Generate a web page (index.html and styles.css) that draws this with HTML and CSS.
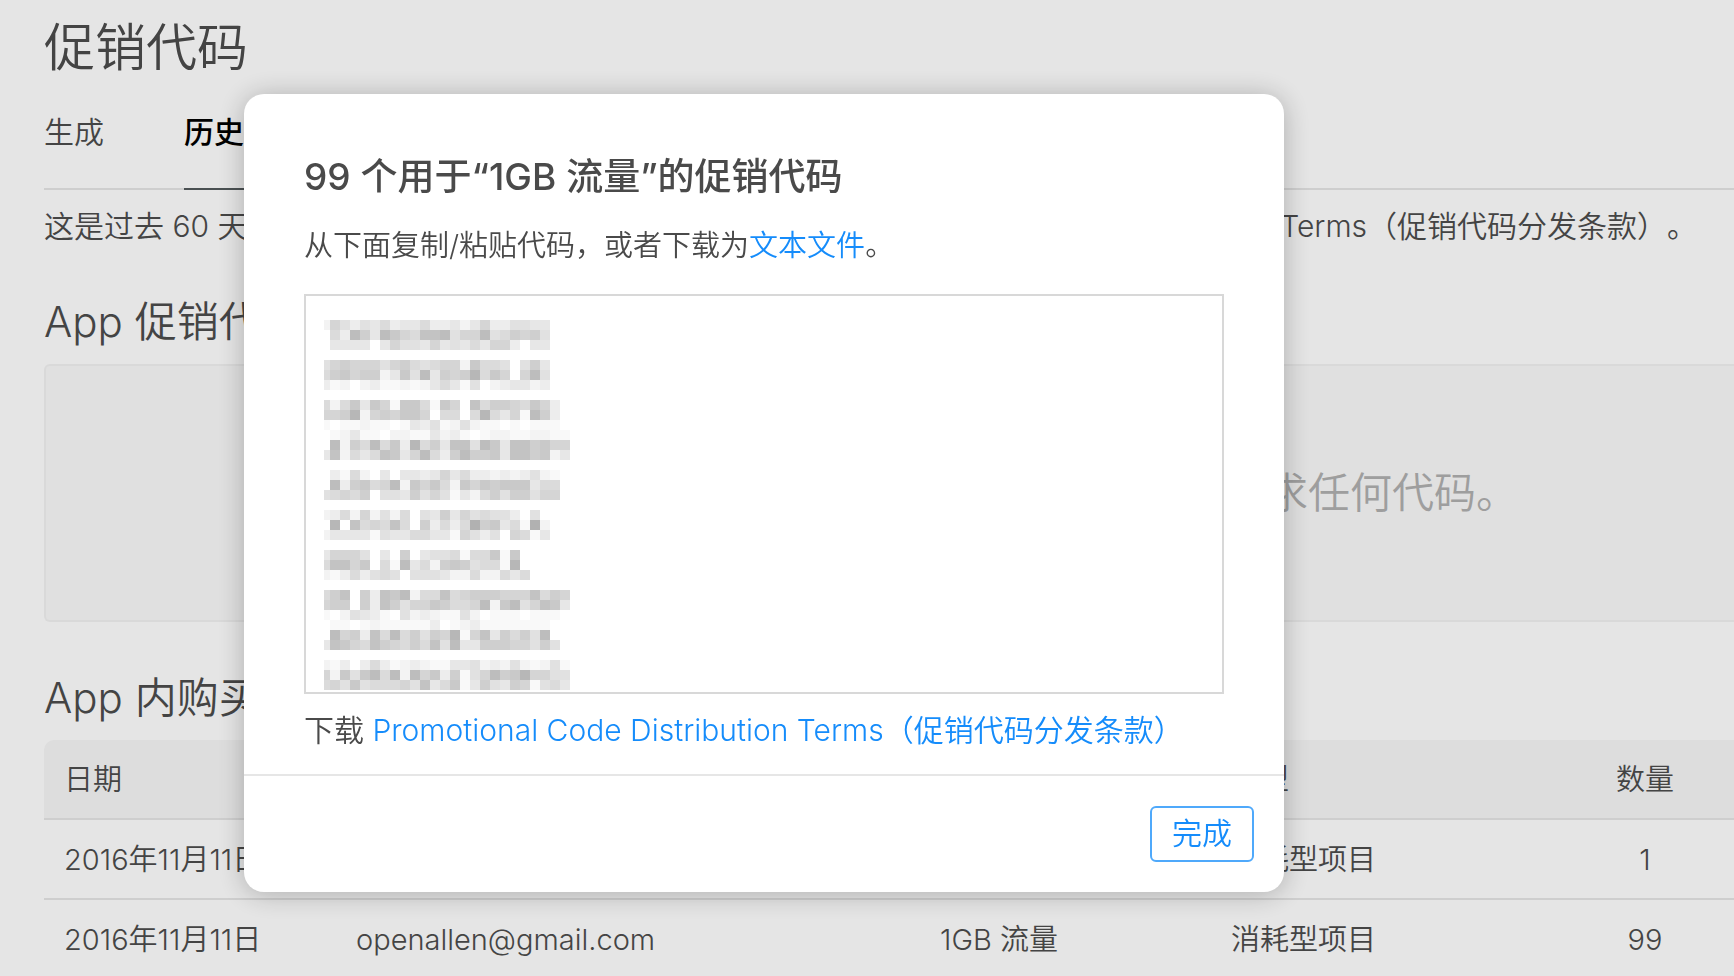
FILE: index.html
```html
<!DOCTYPE html>
<html lang="zh-CN">

<head>
    <meta charset="UTF-8" />
    <meta name="viewport" content="width=device-width, initial-scale=1.0" />
    <link rel="stylesheet" href="styles.css">
    <title>促销代码</title>
</head>

<body>
    <main class="page">
        <h1 class="page-title">促销代码</h1>
        <nav class="tabs">
            <a class="tab" href="#generate">生成</a>
            <a class="tab active" href="#history">历史</a>
        </nav>
        <p class="intro">这是过去 60 天内请求的所有促销代码。使用代码时必须遵守 Promotional Code Distribution Terms（促销代码分发条款）。</p>

        <h2 class="section-title">App 促销代码</h2>
        <div class="empty-box">您在过去 60 天内未请求任何代码。</div>

        <h2 class="section-title">App 内购买</h2>
        <table class="history">
            <thead>
                <tr>
                    <th class="col-date">日期</th>
                    <th class="col-user">用户</th>
                    <th class="col-name">名称</th>
                    <th class="col-type">类型</th>
                    <th class="col-count">数量</th>
                </tr>
            </thead>
            <tbody>
                <tr>
                    <td>2016年11月11日</td>
                    <td>openallen@gmail.com</td>
                    <td>1GB 流量</td>
                    <td>消耗型项目</td>
                    <td class="col-count">1</td>
                </tr>
                <tr>
                    <td>2016年11月11日</td>
                    <td>openallen@gmail.com</td>
                    <td>1GB 流量</td>
                    <td>消耗型项目</td>
                    <td class="col-count">99</td>
                </tr>
            </tbody>
        </table>
    </main>

    <div class="overlay">
        <section class="modal" role="dialog" aria-labelledby="modal-title">
            <div class="modal-body">
                <h2 class="modal-title" id="modal-title">99 个用于“1GB 流量”的促销代码</h2>
                <p class="modal-text">从下面复制/粘贴代码，或者下载为<a href="#file">文本文件</a>。</p>
                <div class="codes">
                    <svg id="mosaic" width="246" height="370" viewBox="4 0 246 370" shape-rendering="crispEdges"></svg>
                </div>
                <p class="modal-terms">下载 <a href="#terms">Promotional Code Distribution Terms（促销代码分发条款）</a></p>
            </div>
            <div class="modal-footer">
                <button type="button" class="btn">完成</button>
            </div>
        </section>
    </div>
    <script src="script.js"></script>
</body>

</html>
```
FILE: styles.css
```css
* {
    margin: 0;
    padding: 0;
    box-sizing: border-box;
}

body {
    background-color: #fff;
    color: #4c4c4c;
    font-family: Inter, "Noto Sans CJK SC", sans-serif;
    font-size: 30px;
    font-weight: 350;
    line-height: 40px;
    text-spacing-trim: space-all;
    overflow: hidden;
}

a {
    color: #158cfb;
    text-decoration: none;
}

.page {
    padding: 12px 0 0 44px;
}

.page-title {
    font-size: 51px;
    font-weight: 350;
    line-height: 72px;
}

.tabs {
    display: flex;
    gap: 80px;
    height: 86px;
    margin-top: 20px;
    border-bottom: 2px solid #e6e6e6;
}

.tab {
    height: 86px;
    padding-top: 8px;
    color: #4c4c4c;
}

.tab.active {
    color: #000;
    font-weight: 500;
    border-bottom: 2px solid #535a5c;
}

.intro {
    padding: 16px 0 32px;
    white-space: nowrap;
}

.section-title {
    font-size: 42px;
    font-weight: 350;
    line-height: 60px;
    padding-top: 14px;
    margin-bottom: 12px;
}

.empty-box {
    height: 258px;
    margin-bottom: 32px;
    padding-right: 216px;
    border: 2px solid #f2f2f2;
    border-right: 0;
    border-radius: 6px 0 0 6px;
    background-color: #fafafa;
    color: #b0b0b0;
    font-size: 42px;
    line-height: 254px;
    text-align: right;
}

.history {
    width: 100%;
    table-layout: fixed;
    border-collapse: separate;
    border-spacing: 0;
    font-size: 29px;
}

.history th,
.history td {
    height: 80px;
    padding: 2px 0 0 20px;
    border-bottom: 2px solid #e6e6e6;
    font-weight: 350;
    text-align: left;
    white-space: nowrap;
}

.history th {
    background-color: #f7f7f7;
}

.history th:first-child {
    border-radius: 10px 0 0 0;
}

.history .col-date {
    width: 292px;
}

.history .col-user {
    width: 584px;
}

.history .col-name {
    width: 291px;
}

.history .col-count {
    width: 178px;
    padding-left: 0;
    text-align: center;
}

.overlay {
    position: fixed;
    inset: 0;
    padding: 94px 0 0 244px;
    background-color: rgba(0, 0, 0, 0.1);
}

.modal {
    width: 1040px;
    max-width: 100%;
    border-radius: 20px;
    background-color: #fff;
    box-shadow: 0 2px 28px rgba(0, 0, 0, 0.25);
    color: #4a4a4a;
}

.modal-body {
    padding: 56px 60px 24px;
}

.modal-title {
    font-size: 37px;
    font-weight: 500;
    line-height: 54px;
    margin-bottom: 22px;
}

.modal-text {
    font-size: 29px;
}

.modal-terms {
    white-space: nowrap;
}

.codes {
    height: 400px;
    margin: 28px 0 16px;
    padding: 24px 18px 0;
    border: 2px solid #d8d8d8;
    overflow: hidden;
}

.codes svg {
    display: block;
}

.modal-footer {
    display: flex;
    justify-content: flex-end;
    padding: 30px;
    border-top: 2px solid #e6e6e6;
}

.btn {
    height: 56px;
    padding: 0 20px 2px;
    border: 2px solid #4fa9fb;
    border-radius: 6px;
    background-color: #fff;
    color: #158cfb;
    font-family: inherit;
    font-size: 30px;
    font-weight: 350;
    line-height: 40px;
    cursor: pointer;
}
```
FILE: script.js
```js
// one line per 10px row, one hex digit per cell (higher is darker)
const rows = [
    "27535463446334247335544",
    "063b84b976aab577b568785",
    "04444047554745464773044",
    "",
    "57877757865677296650584",
    "6897882495b4878c69707b5",
    "31202311212464150234423",
    "",
    "626949719961970a68876973",
    "778c278799706606c6471b83",
    "101121101435125211010111",
    "0124110221142310122112211",
    "0b286b693c684aa5b94aa8977",
    "4a2646a947b638b8894aa8924",
    "",
    "031620404434746332323521",
    "0b38967b2979629798999466",
    "567680554857514268588577",
    "",
    "2362725260548475655305",
    "0c0a676a6083636d89461d2",
    "24444154466441753507614",
    "",
    "47775040804556166919",
    "6aa79061b4628985661c",
    "213635650555422622646",
    "",
    "68a083a9b266a67888777a687",
    "788083a857798667b29b57a94",
    "102543105232115201110111",
    "01101211111301231111111",
    "0b783a6b68587c17a48685b",
    "4a976a87686a5b4488877585",
    "",
    "2130363123211445232521251",
    "72959b6b2b7938157b89c7755",
    "6759566675a46914854871564"
];
const mosaic = document.querySelector("#mosaic");

rows.forEach((row, y) => {
    [...row].forEach((cell, x) => {
        const shade = 255 - parseInt(cell, 16) * 6;
        const rect = document.createElementNS("http://www.w3.org/2000/svg", "rect");
        rect.setAttribute("x", x * 10);
        rect.setAttribute("y", y * 10);
        rect.setAttribute("width", 10);
        rect.setAttribute("height", 10);
        rect.setAttribute("fill", `rgb(${shade}, ${shade}, ${shade})`);
        mosaic.appendChild(rect);
    });
});
```
